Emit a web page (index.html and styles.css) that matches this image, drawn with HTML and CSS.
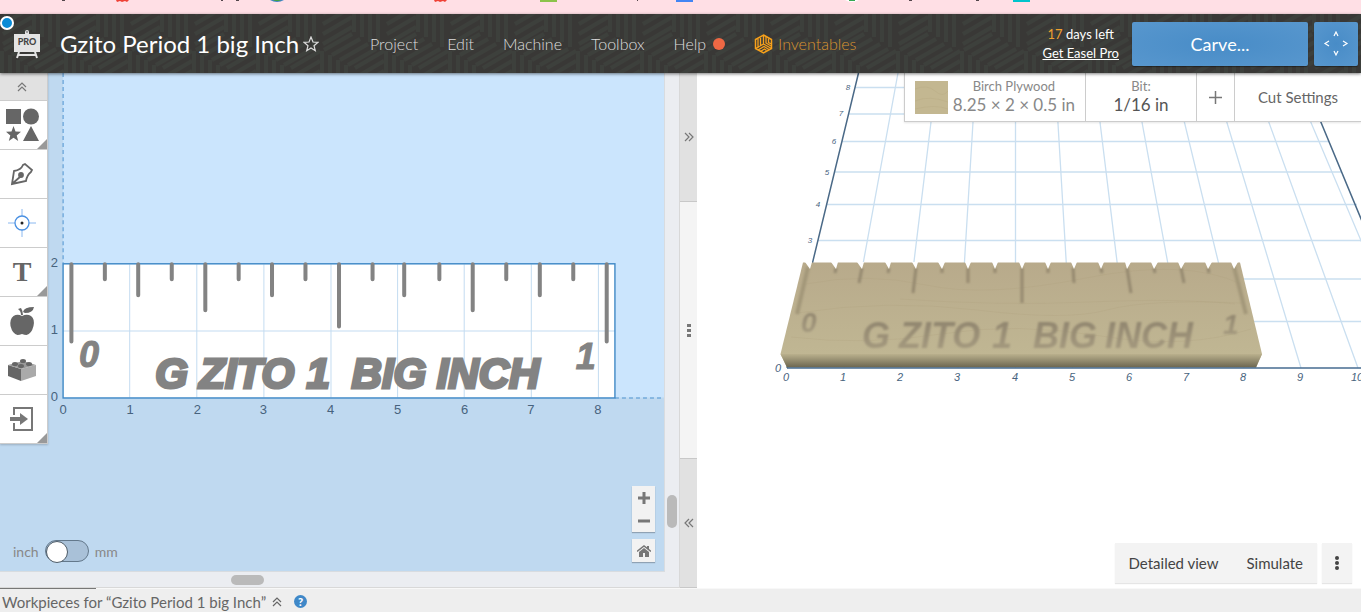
FILE: index.html
```html
<!DOCTYPE html>
<html lang="en">
<head>
    <meta charset="UTF-8">
    <meta name="viewport" content="width=device-width, initial-scale=1.0">
    <title>Gzito Period 1 big Inch</title>
    <link rel="stylesheet" href="styles.css">
</head>
<body>
    <!-- Bookmarks strip -->
    <div class="bookmarks">
        <svg width="1361" height="4" viewBox="0 0 1361 4" aria-hidden="true">
            <path d="M62 0h3M221 0h2M236 0h3M637 0h1M909 0h3M976 0h3" stroke="#54464c" stroke-width="2"/>
            <path d="M116 0l1 2 3-1 2 1 3-1 2 1 2-2zM434 0l1 2 3-1 2 1 3-1 2 1 2-2z" fill="#ef4136"/>
            <path d="M270 0q7 4 14 0z" fill="#4285c4"/>
            <path d="M273 0h8l-2 1h-4z" fill="#43a047"/>
            <path d="M540 0h17v2h-17z" fill="#8bc34a"/>
            <path d="M676 0h17v2h-17z" fill="#4285f4"/>
            <path d="M845 0q7 4 14 0z" fill="#fff"/>
            <path d="M849 0h6v1h-6z" fill="#34a853"/>
            <path d="M1013 0h17v2h-17z" fill="#00c4cc"/>
        </svg>
    </div>

    <!-- Header -->
    <header class="header">
        <svg class="header-pattern" aria-hidden="true">
            <defs>
                <g id="cube" fill="none" stroke="#3d403c" stroke-width="4">
                    <path d="M-30-17v35M-22-13v36M-14-8v36M-6-3v36"/>
                    <path d="M3 30l29-17M3 20l29-17M3 10l29-17M3 0l29-17"/>
                    <path d="M-28-18l28-16M-20-13l28-16M-12-8l28-16M-4-3l28-16"/>
                </g>
                <pattern id="cubes" width="64" height="108" patternUnits="userSpaceOnUse">
                    <use href="#cube" x="0" y="0"/>
                    <use href="#cube" x="64" y="0"/>
                    <use href="#cube" x="32" y="54"/>
                    <use href="#cube" x="0" y="108"/>
                    <use href="#cube" x="64" y="108"/>
                </pattern>
            </defs>
            <rect width="100%" height="100%" fill="url(#cubes)"/>
        </svg>
        <span class="status-dot"></span>
        <a class="logo" href="#" aria-label="Easel Pro">
            <svg width="28" height="30" viewBox="0 0 28 30">
                <path d="M12 5V3a2 2 0 014 0v2h11v18H1V5z" fill="#e4e4e4"/>
                <circle cx="14" cy="3" r="1" fill="#888"/>
                <path d="M6 23l-2 6M22 23l2 6M5 26h18" stroke="#e4e4e4" stroke-width="2"/>
                <text x="14" y="16" text-anchor="middle" class="logo-text">PRO</text>
            </svg>
        </a>
        <h1 class="title">Gzito Period 1 big Inch</h1>
        <button class="star" aria-label="Favorite">
            <svg width="16" height="16" viewBox="0 0 16 16">
                <path d="M8 1l2 5 5 .3-4 3.4 1.300 5L8 12l-4.300 2.700 1.300-5-4-3.400 5-.3z" fill="none" stroke="#ddd" stroke-width="1.200"/>
            </svg>
        </button>
        <nav class="menu">
            <a href="#">Project</a>
            <a href="#">Edit</a>
            <a href="#">Machine</a>
            <a href="#">Toolbox</a>
            <a href="#" class="help">Help <span class="help-dot"></span></a>
            <a href="#" class="inventables">
                <svg width="19" height="20" viewBox="0 0 19 20" fill="none" stroke="#f7a11b">
                    <path d="M9.500 1l8 4.500v9l-8 4.500-8-4.500v-9z" stroke-width="1.500"/>
                    <path d="M4 5v9M6.500 4v8M9.500 2v8l-8 4.500M9.500 10l8 4.500M12 3v6l5 3M14.500 4.500v4l3 1.500M4 16l6-3.500 5 3M6.500 17.500l4-2.500 2 1.500" stroke-width="1.300"/>
                </svg>
                Inventables
            </a>
        </nav>
        <div class="trial">
            <p><span class="days">17</span> days left</p>
            <a href="#">Get Easel Pro</a>
        </div>
        <button class="btn carve">Carve...</button>
        <button class="btn jog" aria-label="Jog machine">
            <svg width="26" height="26" viewBox="0 0 26 26" fill="none" stroke="#fff" stroke-width="1.200">
                <path d="M11 5l2-4 2 4M11 20l2 4 2-4M6 10l-4 2.500L6 15M20 10l4 2.500-4 2.500"/>
            </svg>
        </button>
    </header>

    <main class="workspace">
        <!-- 2D design canvas -->
        <section class="design">
            <div class="canvas">
                <svg class="drawing" viewBox="0 73 663 498" preserveAspectRatio="xMinYMin slice">
                    <rect x="63" y="73" width="900" height="324" fill="#cbe5fd"/>
                    <path d="M63 73v190M614 397.500h350" stroke="#4f94d0" stroke-dasharray="4 3" fill="none"/>
                    <rect x="63" y="264" width="551" height="133" fill="#fff"/>
                    <path d="M129.500 264v133M196.500 264v133M263.500 264v133M330.500 264v133M397 264v133M463.500 264v133M530.500 264v133M597.500 264v133M63 330.500h551" stroke="#c4dcf1"/>
                    <rect x="63" y="263.500" width="551" height="134" fill="none" stroke="#4089c6" stroke-width="1.400"/>
                    <path class="ticks" d="M71.300 264v77M104.700 264v15M138 264v31M171.500 264v15M205 264v46M238.300 264v15M271.600 264v31M305 264v15M338.500 264v62M372 264v15M403.600 264v31M438.700 264v15M472 264v46M505.500 264v15M539 264v31M572.400 264v15M605.800 264v77"/>
                    <g class="lettering">
                        <text x="79" y="367" class="small">0</text>
                        <text x="155" y="388">G</text>
                        <text x="199" y="388">ZITO</text>
                        <text x="306" y="388">1</text>
                        <text x="351" y="388">BIG</text>
                        <text x="436" y="388">INCH</text>
                        <text x="575" y="369" class="small">1</text>
                    </g>
                    <g class="ruler-y">
                        <text x="58" y="267">2</text>
                        <text x="58" y="334">1</text>
                        <text x="58" y="401">0</text>
                    </g>
                    <g class="ruler-x">
                        <text x="63" y="414">0</text>
                        <text x="130" y="414">1</text>
                        <text x="197" y="414">2</text>
                        <text x="263" y="414">3</text>
                        <text x="330" y="414">4</text>
                        <text x="397" y="414">5</text>
                        <text x="464" y="414">6</text>
                        <text x="530" y="414">7</text>
                        <text x="597" y="414">8</text>
                    </g>
                </svg>

                <div class="toolbar">
                    <button class="collapse" aria-label="Collapse">
                        <svg width="12" height="12" viewBox="0 0 12 12" fill="none" stroke="#777" stroke-width="1.200"><path d="M2 6l4-4 4 4M2 10l4-4 4 4"/></svg>
                    </button>
                    <button class="tool more" aria-label="Shapes">
                        <svg width="34" height="34" viewBox="0 0 34 34" fill="#666"><path d="M1 1h15v15H1zM26 18l8 15H18zM8.500 18l2 5.500 5.500.3-4.300 3.600 1.500 5.600-4.700-3.200L3.800 33l1.500-5.600L1 23.800l5.500-.3z"/><circle cx="26" cy="8.500" r="8"/></svg>
                    </button>
                    <button class="tool" aria-label="Pen">
                        <svg width="24" height="24" viewBox="0 0 24 24" fill="none" stroke="#666" stroke-width="1.800"><path d="M2 22l2-13q7-1 9-6l2-1 7 6-1 2q-4 3-5 9zM2 22l9-8"/><circle cx="11" cy="13" r="2" fill="#666"/></svg>
                    </button>
                    <button class="tool" aria-label="Origin">
                        <svg width="28" height="28" viewBox="0 0 28 28" fill="none" stroke="#8ab8f0"><path d="M14 0v28M0 14h28"/><circle cx="14" cy="14" r="7" fill="#fff" stroke="#4a90e2" stroke-width="1.300"/><circle cx="14" cy="14" r="1.500" fill="#222" stroke="none"/></svg>
                    </button>
                    <button class="tool more text-tool" aria-label="Text">T</button>
                    <button class="tool" aria-label="Icons">
                        <svg width="26" height="30" viewBox="0 0 26 30" fill="#666"><path d="M13 10q5-2.500 9 0 4 3 2.500 10-2 8-7 9-2 0-4.500-1-2.500 1-4.500 1-5-1-7-9-1-7 3-10 4-2.500 8.500 0zM9 3l3-1q2 3 2 7h-2q0-4-3-6zM14 6q1-5 11-5-1 6-9 6z"/></svg>
                    </button>
                    <button class="tool" aria-label="Apps">
                        <svg width="28" height="22" viewBox="0 0 28 22"><path d="M0 6l13 4v12L0 17z" fill="#666"/><path d="M13 10l15-4v11l-15 5z" fill="#aaa"/><path d="M0 6l15-4 13 4-15 4z" fill="#999"/><g fill="#666"><ellipse cx="15" cy="2" rx="3" ry="2"/><ellipse cx="7" cy="5" rx="3" ry="2"/><ellipse cx="21" cy="5" rx="3" ry="2"/><ellipse cx="13" cy="7" rx="3" ry="2"/></g></svg>
                    </button>
                    <button class="tool more" aria-label="Import">
                        <svg width="26" height="26" viewBox="0 0 26 26" fill="none" stroke="#777" stroke-width="2"><path d="M5 9V2h18v22H5v-7"/><path d="M1 13h11" stroke-width="4"/><path d="M11 7l8 6-8 6z" fill="#777" stroke="none"/></svg>
                    </button>
                </div>

                <label class="units">
                    <span>inch</span>
                    <input type="checkbox" class="switch" aria-label="Use millimeters">
                    <span>mm</span>
                </label>

                <div class="zoom">
                    <div class="zoom-pair">
                        <button aria-label="Zoom in"><svg width="12" height="12" viewBox="0 0 12 12" stroke="#777" stroke-width="3"><path d="M6 0v12M0 6h12"/></svg></button>
                        <button aria-label="Zoom out"><svg width="12" height="12" viewBox="0 0 12 12" stroke="#777" stroke-width="3"><path d="M0 6h12"/></svg></button>
                    </div>
                    <button aria-label="Fit view"><svg width="14" height="12" viewBox="0 0 14 12" fill="#777"><path d="M7 3l5 4v5H8V8H6v4H2V7z"/><path d="M0 6.500L7 1l7 5.500" fill="none" stroke="#777" stroke-width="1.500"/><path d="M10 1h2v4l-2-2z"/></svg></button>
                </div>
            </div>
            <div class="scroll-y"><span></span></div>
            <div class="scroll-x"><span></span></div>
        </section>

        <!-- Pane divider -->
        <div class="divider">
            <button class="expand" aria-label="Expand design"><svg width="10" height="10" viewBox="0 0 10 10" fill="none" stroke="#777" stroke-width="1.200"><path d="M1 1l4 4-4 4M5 1l4 4-4 4"/></svg></button>
            <button class="drag" aria-label="Resize"><svg width="4" height="14" viewBox="0 0 4 14" fill="#777"><path d="M0 1h4v3H0zM0 6h4v3H0zM0 11h4v3H0z"/></svg></button>
            <button class="expand" aria-label="Expand preview"><svg width="10" height="10" viewBox="0 0 10 10" fill="none" stroke="#777" stroke-width="1.200"><path d="M5 1L1 5l4 4M9 1L5 5l4 4"/></svg></button>
        </div>

        <!-- 3D preview -->
        <section class="preview">
            <svg class="drawing" viewBox="697 73 664 515" preserveAspectRatio="xMinYMin slice">
                <defs>
                    <linearGradient id="top" x1="0" y1="0" x2="0" y2="1">
                        <stop offset="0" stop-color="#b8aa8b"/>
                        <stop offset="1" stop-color="#c1b894"/>
                    </linearGradient>
                    <linearGradient id="front" x1="0" y1="0" x2="0" y2="1">
                        <stop offset="0" stop-color="#bab08d"/>
                        <stop offset="1" stop-color="#6c6650"/>
                    </linearGradient>
                    <linearGradient id="carved" x1="0" y1="0" x2="0" y2="1">
                        <stop offset="0.200" stop-color="#928770"/>
                        <stop offset="1" stop-color="#a99e82"/>
                    </linearGradient>
                    <filter id="soft"><feGaussianBlur stdDeviation="0.800"/></filter>
                </defs>
                <g fill="none" stroke="#cadff0" stroke-width="1.300">
                    <path d="M855 87.500H1306M848.500 114H1317M842 141.500H1329M834.500 172H1342M827 204.500H1357M818 240.500H1361M809 279H1361M798 321.500H1361"/>
                    <path d="M898 73L844 368M937 73l-36 295M976 73l-18 295M1015.500 73v295M1055 73l17.500 295M1094 73l36 295M1133 73l54 295M1172.500 73l71.500 295M1212 73l89 295M1251 73l107 295M1290 73l125 295"/>
                </g>
                <path d="M858.500 73L787 368M1300.500 73L1423 368" stroke="#4a6987" stroke-width="1.500"/>
                <path d="M803 262.500H1240L1262 354 1256 367.500H787L780.500 354z" fill="url(#top)"/>
                <g fill="none" stroke="#ab9b78" stroke-width="1" opacity=".2">
                    <path d="M806 284q60-12 120 1t160-7 155 6M797 313q90-14 180-3t130 0 135-7M791 337q75 9 150-3t160 2 150-7M900 299q100 7 190 3t145 2"/>
                </g>
                <path d="M780.500 354H1262l-6 13.500H787z" fill="url(#front)"/>
                <g filter="url(#soft)" fill="none" stroke="#95896f" stroke-width="3">
                    <path d="M836 268l-1 5M862 268l-3 15M889 268l-1 5M916 268l-3 25M942 268v5M968 268v15M995 268v5M1022 268v35M1048 268v5M1073 268l1 15M1101 268l1 5M1127 268l4 25M1154 268l1 5M1181 268l3 15M1208 268l1 5"/>
                    <path d="M808 267l-11 47M1234 267l12 47" stroke-width="4" stroke="#a39779"/>
                </g>
                <path fill="#fff" d="M805 262h7l-2 7zM831 262h7l-2 7zM857 262h7l-2 7zM885 262h6l-2 7zM912 262h6l-2 7zM938 262h7l-3 7zM965 262h6l-3 7zM992 262h6l-3 7zM1019 262h6l-3 7zM1045 262h6l-3 7zM1071 262h6l-3 7zM1098 262h6l-3 7zM1125 262h6l-4 7zM1151 262h7l-4 7zM1178 262h7l-4 7zM1205 262h7l-4 7zM1231 262h7l-4 7z"/>
                <g class="carving" fill="url(#carved)" filter="url(#soft)">
                    <text x="801" y="332" class="small">0</text>
                    <text x="862" y="348">G</text>
                    <text x="899" y="348">ZITO</text>
                    <text x="992" y="348">1</text>
                    <text x="1033" y="348">BIG</text>
                    <text x="1105" y="348">INCH</text>
                    <text x="1223" y="334" class="small">1</text>
                </g>
                <path d="M787 368H1361" stroke="#466b91" stroke-width="1.500"/>
                <g class="axis">
                    <text x="778" y="372">0</text>
                    <text x="786" y="381">0</text>
                    <text x="843" y="381">1</text>
                    <text x="900" y="381">2</text>
                    <text x="957" y="381">3</text>
                    <text x="1015" y="381">4</text>
                    <text x="1072" y="381">5</text>
                    <text x="1129" y="381">6</text>
                    <text x="1186" y="381">7</text>
                    <text x="1243" y="381">8</text>
                    <text x="1300" y="381">9</text>
                    <text x="1357" y="381">10</text>
                </g>
                <g class="axis far">
                    <text x="810" y="243">3</text>
                    <text x="818" y="207">4</text>
                    <text x="827" y="175">5</text>
                    <text x="834" y="144">6</text>
                    <text x="841" y="116">7</text>
                    <text x="848" y="90">8</text>
                </g>
            </svg>

            <div class="settings">
                <button class="material">
                    <svg width="33" height="33" viewBox="0 0 33 33"><path d="M0 0h33v33H0z" fill="#c3b791"/><path d="M0 8q12-5 20 2t13 0M0 20q14-6 33 1M0 28q20-5 33 0" fill="none" stroke="#b3a47d" opacity=".3"/></svg>
                    <span><small>Birch Plywood</small>8.25 × 2 × 0.5 in</span>
                </button>
                <button class="bit"><small>Bit:</small>1/16 in</button>
                <button class="add" aria-label="Add bit"><svg width="13" height="13" viewBox="0 0 13 13" stroke="#777" stroke-width="1.500"><path d="M6.500 0v13M0 6.500h13"/></svg></button>
                <button class="cut">Cut Settings</button>
            </div>

            <div class="view-actions">
                <div class="view-pair">
                    <button>Detailed view</button>
                    <button>Simulate</button>
                </div>
                <button class="kebab" aria-label="More"><svg width="4" height="14" viewBox="0 0 4 14" fill="#444"><circle cx="2" cy="2" r="2"/><circle cx="2" cy="7" r="2"/><circle cx="2" cy="12" r="2"/></svg></button>
            </div>
        </section>
    </main>

    <!-- Workpieces bar -->
    <footer class="footer">
        <span>Workpieces for “Gzito Period 1 big Inch”</span>
        <svg width="10" height="10" viewBox="0 0 10 10" fill="none" stroke="#666" stroke-width="1.200"><path d="M1 5l4-4 4 4M1 9l4-4 4 4"/></svg>
        <a class="question" href="#" aria-label="Help">?</a>
    </footer>
</body>
</html>
```
FILE: styles.css
```css
* {
    margin: 0;
    padding: 0;
    box-sizing: border-box;
}

body {
    font-family: Lato, sans-serif;
    font-size: 16px;
    color: #555;
    height: 100vh;
    display: flex;
    flex-direction: column;
    overflow: hidden;
}

button {
    font: inherit;
    color: inherit;
    background: none;
    border: none;
    cursor: pointer;
}

a {
    color: inherit;
    text-decoration: none;
}

svg {
    display: block;
    flex: none;
}

.bookmarks {
    height: 14px;
    background: #ffdfe5;
    overflow: hidden;
}

/* Header */
.header {
    position: relative;
    z-index: 3;
    display: flex;
    align-items: center;
    height: 59px;
    padding: 0 3px 0 13px;
    background: #393836;
    color: #fff;
    box-shadow: 0 1px 3px rgba(0, 0, 0, 0.5);
}

.header > * {
    position: relative;
}

.header .header-pattern {
    position: absolute;
    top: 0;
    left: 0;
    width: 100%;
    height: 100%;
}

.header .status-dot {
    position: absolute;
    top: 2px;
    left: 0;
    width: 14px;
    height: 14px;
    border: 2px solid #fff;
    border-radius: 50%;
    background: #0a8bd6;
}

.logo-text {
    font-size: 9px;
    font-weight: 900;
    fill: #444;
}

.title {
    margin-left: 19px;
    font-size: 24px;
    font-weight: 400;
    white-space: nowrap;
}

.star {
    margin-left: 4px;
}

.menu {
    display: flex;
    align-items: center;
    gap: 29px;
    margin-left: 51px;
    font-weight: 300;
    color: #ddd;
}

.menu a {
    display: flex;
    align-items: center;
    gap: 7px;
}

.help-dot {
    width: 12px;
    height: 12px;
    border-radius: 50%;
    background: #ee6844;
}

.menu .inventables {
    gap: 5px;
    color: #d9932f;
}

.trial {
    margin-left: auto;
    font-size: 13px;
    line-height: 19px;
    text-align: center;
    white-space: nowrap;
}

.trial a {
    text-decoration: underline;
}

.days {
    color: #f0a030;
}

.btn {
    height: 44px;
    border-radius: 2px;
    background: radial-gradient(#488cc7, #5897ce);
    color: #fff;
    box-shadow: 0 1px 1px rgba(0, 0, 0, 0.4);
}

.carve {
    width: 176px;
    margin-left: 13px;
    font-size: 18px;
}

.jog {
    width: 44px;
    margin-left: 6px;
    display: flex;
    align-items: center;
    justify-content: center;
}

/* Panes */
.workspace {
    flex: 1;
    display: flex;
    min-height: 0;
}

.design {
    flex: 680 1 0;
    min-width: 0;
    display: grid;
    grid-template-columns: 1fr 15px;
    grid-template-rows: 1fr 16px;
    background: #ebedf1;
}

.canvas {
    position: relative;
    background: #bfd9f0;
    border-right: 1px solid #d8dce0;
    border-bottom: 1px solid #d8dce0;
    overflow: hidden;
}

.drawing {
    position: absolute;
    top: 0;
    left: 0;
    width: 100%;
    height: 100%;
}

.ticks {
    fill: none;
    stroke: #838383;
    stroke-width: 4px;
    stroke-linecap: round;
}

.lettering {
    font-family: "Liberation Sans", sans-serif;
    font-size: 42px;
    font-weight: 700;
    font-style: italic;
    fill: #838383;
    stroke: #838383;
    stroke-width: 3px;
}

.lettering .small {
    font-size: 36px;
    stroke-width: 1px;
}

.ruler-x,
.ruler-y {
    font-family: "Liberation Sans", sans-serif;
    font-size: 13px;
    fill: #47637e;
    text-anchor: middle;
}

.ruler-y {
    text-anchor: end;
}

.toolbar {
    position: absolute;
    top: 0;
    left: 0;
    width: 48px;
    border-right: 1px solid #ccc;
    background: #fff;
    box-shadow: 0 1px 2px rgba(0, 0, 0, 0.2);
}

.collapse {
    display: flex;
    align-items: center;
    justify-content: center;
    width: 100%;
    height: 28px;
    padding-right: 4px;
    background: #e1e1e1;
    border-bottom: 1px solid #ccc;
}

.tool {
    position: relative;
    display: flex;
    align-items: center;
    justify-content: center;
    width: 100%;
    height: 49px;
    padding-right: 3px;
    border-bottom: 1px solid #ccc;
}

.more::after {
    content: "";
    position: absolute;
    right: 0;
    bottom: 0;
    border: 5px solid transparent;
    border-right-color: #999;
    border-bottom-color: #999;
}

.text-tool {
    font-family: "Liberation Serif", serif;
    font-size: 28px;
    font-weight: 700;
    color: #666;
}

.units {
    position: absolute;
    left: 13px;
    bottom: 9px;
    display: flex;
    align-items: center;
    gap: 6px;
    font-size: 14px;
    color: #888;
}

.switch {
    appearance: none;
    width: 44px;
    height: 22px;
    border: 1px solid #63788b;
    border-radius: 11px;
    background: #a9c1d8;
}

.switch::before {
    content: "";
    display: block;
    width: 20px;
    height: 20px;
    border: 1px solid #4e5c68;
    border-radius: 50%;
    background: #fff;
}

.switch:checked::before {
    margin-left: auto;
}

.zoom {
    position: absolute;
    right: 9px;
    bottom: 9px;
    display: flex;
    flex-direction: column;
    gap: 7px;
}

.zoom button {
    display: flex;
    align-items: center;
    justify-content: center;
    width: 23px;
    height: 23px;
    background: #f2f2f2;
}

.zoom-pair,
.zoom > button {
    box-shadow: 0 1px 1px rgba(0, 0, 0, 0.25);
}

.scroll-y {
    display: flex;
    justify-content: center;
    align-items: flex-end;
    padding-bottom: 44px;
    border-right: 1px solid #d8d8d8;
}

.scroll-y span {
    width: 10px;
    height: 33px;
    border-radius: 5px;
    background: #bababa;
}

.scroll-x {
    grid-column: 1 / -1;
    display: flex;
    align-items: center;
    padding-left: 34%;
    border-right: 1px solid #d8d8d8;
    border-bottom: 1px solid #d8d8d8;
}

.scroll-x span {
    width: 33px;
    height: 10px;
    border-radius: 5px;
    background: #bababa;
}

.divider {
    display: flex;
    flex-direction: column;
    width: 17px;
    background: #f4f4f4;
}

.divider button {
    display: flex;
    align-items: center;
    justify-content: center;
}

.divider .expand {
    flex: 1;
    background: #e1e1e1;
    border-bottom: 1px solid #c8c8c8;
}

.divider .drag {
    flex: 2;
    border-bottom: 1px solid #c8c8c8;
}

.preview {
    position: relative;
    flex: 664 1 0;
    min-width: 0;
    background: #fff;
}

.carving {
    font-family: "Liberation Sans", sans-serif;
    font-size: 36px;
    font-weight: 700;
    font-style: italic;
}

.carving .small {
    font-size: 28px;
}

.axis {
    font-family: "Liberation Sans", sans-serif;
    font-size: 11px;
    font-style: italic;
    fill: #47637e;
    text-anchor: middle;
}

.axis.far {
    font-size: 8px;
}

.settings {
    position: absolute;
    top: 0;
    right: 0;
    display: flex;
    height: 49px;
    background: #fff;
    border-bottom: 1px solid #ccc;
    box-shadow: 0 1px 2px rgba(0, 0, 0, 0.1);
}

.settings button {
    border-left: 1px solid #ccc;
    white-space: nowrap;
}

.settings small {
    display: block;
    font-size: 13px;
    line-height: 16px;
    color: #888;
}

.settings .material {
    display: flex;
    align-items: center;
    gap: 5px;
    padding: 0 10px;
    font-size: 17px;
    line-height: 22px;
    color: #888;
}

.settings .bit {
    width: 111px;
    font-size: 17px;
    line-height: 22px;
}

.settings .add {
    display: flex;
    align-items: center;
    justify-content: center;
    width: 38px;
}

.settings .cut {
    width: 127px;
    font-size: 15px;
    color: #666;
}

.view-actions {
    position: absolute;
    right: 9px;
    bottom: 5px;
    display: flex;
    gap: 5px;
    font-size: 15px;
    color: #444;
}

.view-pair,
.kebab {
    display: flex;
    align-items: center;
    justify-content: center;
    height: 40px;
    background: #f3f3f3;
    box-shadow: 0 1px 1px rgba(0, 0, 0, 0.1);
}

.view-pair button {
    padding: 0 14px;
}

.kebab {
    width: 30px;
}

/* Workpieces bar */
.footer {
    position: relative;
    display: flex;
    align-items: center;
    gap: 6px;
    height: 24px;
    padding: 2px 2px 0;
    background: #eee;
    border-top: 1px solid #f8f8f8;
    font-size: 15px;
    color: #666;
}

.footer::before {
    content: "";
    position: absolute;
    top: -1px;
    left: 0;
    width: 96px;
    height: 1px;
    background: #777;
}

.question {
    width: 13px;
    height: 13px;
    margin-left: 6px;
    border-radius: 50%;
    background: #3f88c8;
    color: #fff;
    font-size: 11px;
    font-weight: 900;
    line-height: 13px;
    text-align: center;
}
```
